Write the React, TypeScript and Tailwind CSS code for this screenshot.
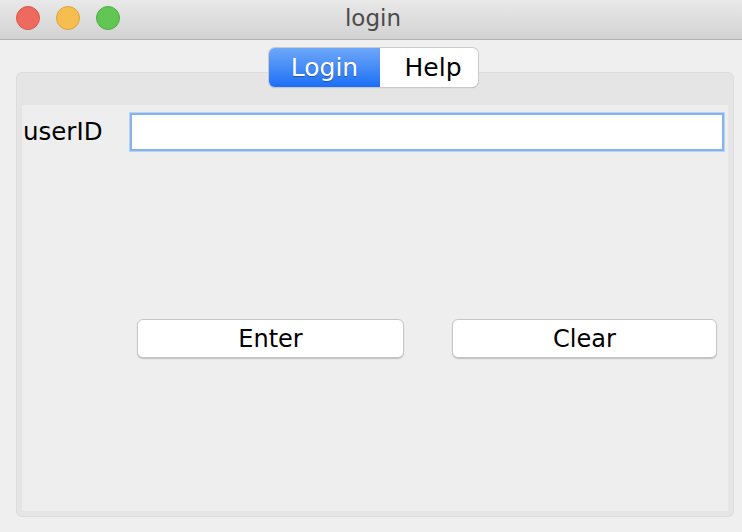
export default function App() {
  const font = { fontFamily: '"DejaVu Sans", "Liberation Sans", sans-serif' };

  return (
    <div className="w-[742px] h-[532px] bg-[#efefef] overflow-hidden flex flex-col" style={font}>
      {/* title bar */}
      <div className="h-[40px] shrink-0 flex items-center relative bg-gradient-to-b from-[#e9e9e9] to-[#d2d2d2] border-b border-[#b4b4b4]">
        <div className="flex items-center gap-[16px] pl-[16px] pb-[4px]">
          <span className="w-[24px] h-[24px] rounded-full bg-[#ee6a5f] border border-[#d9564b]" />
          <span className="w-[24px] h-[24px] rounded-full bg-[#f6be4f] border border-[#dea23a]" />
          <span className="w-[24px] h-[24px] rounded-full bg-[#62c655] border border-[#50ac44]" />
        </div>
        <div className="absolute inset-0 flex items-center justify-center pl-[4px] pb-[2px] text-[23px] text-[#4b4b4b]">
          login
        </div>
      </div>

      {/* segmented tabs */}
      <div className="flex justify-center pt-[8px] relative z-10 pl-[5px]">
        <div className="flex h-[39px] rounded-[6px] shadow-[0_0_0_1px_#c9c9c9,0_1px_1px_rgba(0,0,0,0.25)] overflow-hidden text-[25px]">
          <div className="w-[111px] flex items-center justify-center text-white bg-gradient-to-b from-[#6ca7f8] to-[#1a6ef6] [text-shadow:0_1px_1px_rgba(0,0,0,0.35)]">
            Login
          </div>
          <div className="w-[98px] flex items-center justify-center pl-[8px] text-black bg-white">
            Help
          </div>
        </div>
      </div>

      {/* panel */}
      <div className="ml-[16px] mr-[8px] mt-[-15px] h-[445px] rounded-[6px] bg-[#e5e5e5] border border-[#dcdcdc] px-[5px] pt-[32px] pb-[5px] flex">
        <div className="flex-1 bg-[#eeeeee] flex flex-col">
          <div className="flex items-center pt-[8px] pr-[4px]">
            <span className="w-[108px] pl-[1px] text-[24.5px] text-black leading-none">userID</span>
            <div className="flex-1 h-[38px] bg-white border-2 border-[#84b3ee] shadow-[0_0_0_1px_#b9d3f4]" />
          </div>
          <div className="flex mt-[168px] pl-[115px] gap-[48px]">
            <button className="w-[267px] h-[39px] bg-white rounded-[6px] border border-[#c6c6c6] shadow-[0_1px_1px_rgba(0,0,0,0.2)] text-[24px] text-black">
              Enter
            </button>
            <button className="w-[265px] h-[39px] bg-white rounded-[6px] border border-[#c6c6c6] shadow-[0_1px_1px_rgba(0,0,0,0.2)] text-[24px] text-black">
              Clear
            </button>
          </div>
        </div>
      </div>
    </div>
  );
}
